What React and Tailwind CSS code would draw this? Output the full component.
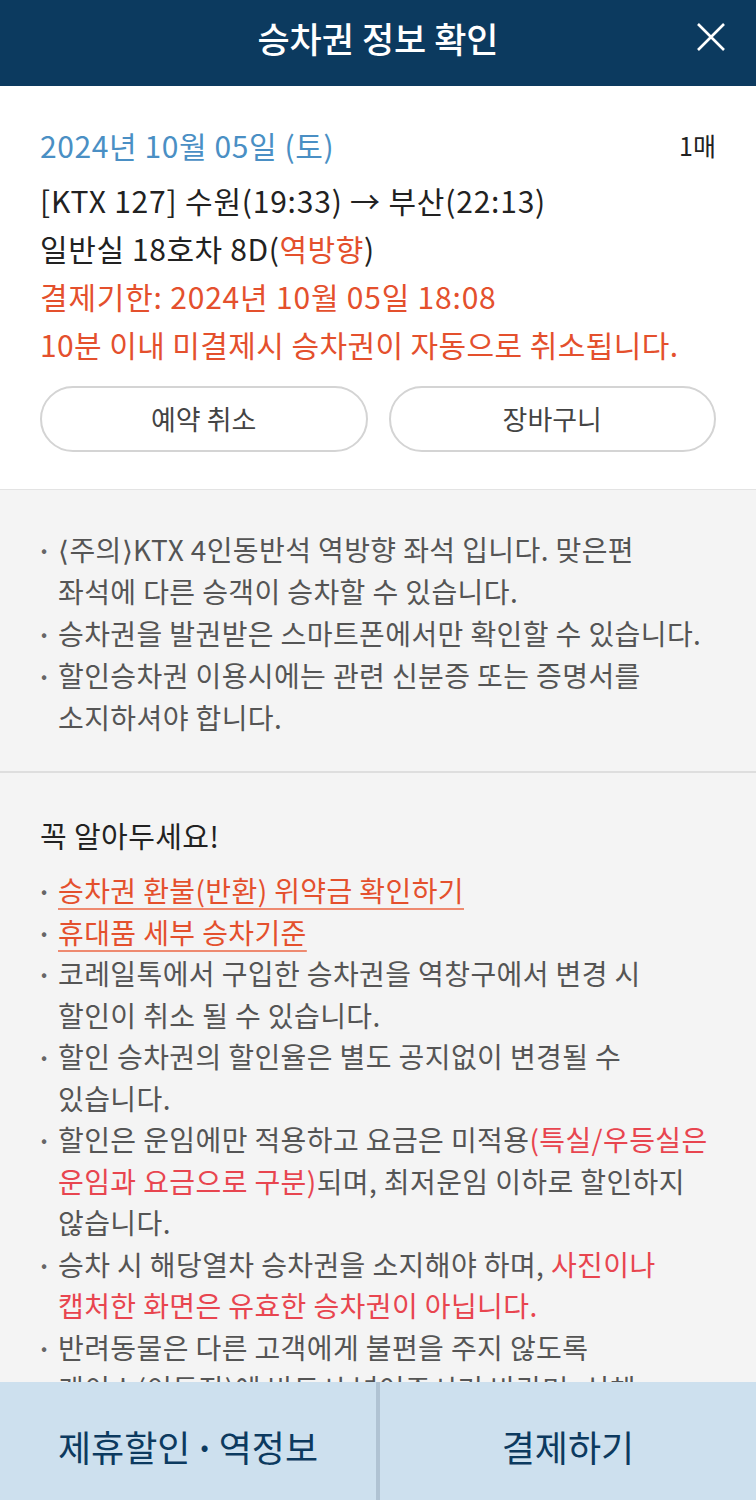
import React from "react";

const F = { fontFamily: '"Noto Sans CJK KR", "Noto Sans", sans-serif' };

function Bullet({ children }) {
  return (
    <div className="flex">
      <span className="w-[18px] shrink-0 text-[#666] text-[18px] pl-[1px]">•</span>
      <div className="flex-1 whitespace-nowrap">{children}</div>
    </div>
  );
}

export default function App() {
  return (
    <div style={F} className="w-[756px] min-h-[1500px] bg-[#f4f4f4] relative">
      <header className="h-[86px] bg-[#0c3a5f] flex items-center justify-center relative">
        <h1 className="text-white text-[35px] font-medium tracking-[0px] pb-[10px]">승차권 정보 확인</h1>
        <svg className="absolute right-[30px] top-[22px]" width="30" height="30" viewBox="0 0 30 30">
          <path d="M2 2 L28 28 M28 2 L2 28" stroke="white" strokeWidth="2.6" fill="none" />
        </svg>
      </header>

      <section className="bg-white px-[40px] pt-[35px] pb-[37px] border-b border-[#e3e3e3]">
        <div className="flex items-center justify-between leading-[48px] mb-[7px]">
          <span className="text-[#4a8fc4] text-[30px] tracking-[0.6px]">2024년 10월 05일 (토)</span>
          <span className="text-[#222] text-[25px]">1매</span>
        </div>
        <div className="text-[#222] text-[30px] leading-[48px] tracking-[0.8px] whitespace-nowrap">[KTX 127] 수원(19:33) → 부산(22:13)</div>
        <div className="text-[#222] text-[30px] leading-[48px] tracking-[0.6px]">
          일반실 18호차 8D(<span className="text-[#e4502d]">역방향</span>)
        </div>
        <div className="text-[#e4502d] text-[30px] leading-[48px] tracking-[0.8px] whitespace-nowrap">결제기한: 2024년 10월 05일 18:08</div>
        <div className="text-[#e4502d] text-[30px] leading-[48px] tracking-[0.4px] whitespace-nowrap">10분 이내 미결제시 승차권이 자동으로 취소됩니다.</div>
        <div className="grid grid-cols-2 gap-[21px] mt-[18px]">
          <button className="h-[66px] rounded-full border-2 border-[#d4d4d4] bg-white text-[#444] text-[27px]">예약 취소</button>
          <button className="h-[66px] rounded-full border-2 border-[#d4d4d4] bg-white text-[#444] text-[27px]">장바구니</button>
        </div>
      </section>

      <section className="bg-[#f4f4f4] px-[40px] pt-[38px] pb-[33px] border-b-2 border-[#dedede] text-[#555] text-[28px] leading-[42px] tracking-[0.4px]">
        <Bullet>⟨주의⟩KTX 4인동반석 역방향 좌석 입니다. 맞은편<br />좌석에 다른 승객이 승차할 수 있습니다.</Bullet>
        <Bullet>승차권을 발권받은 스마트폰에서만 확인할 수 있습니다.</Bullet>
        <Bullet>할인승차권 이용시에는 관련 신분증 또는 증명서를<br />소지하셔야 합니다.</Bullet>
      </section>

      <section className="bg-[#f4f4f4] px-[40px] pt-[41px] pb-[160px] text-[#555] text-[28px] leading-[41.5px] tracking-[0.4px]">
        <h2 className="text-[#222] text-[29px] leading-[42px] mb-[14px]">꼭 알아두세요!</h2>
        <Bullet>
          <span className="text-[#e4502d] underline decoration-2 decoration-[#ee8a70] underline-offset-[6px]">승차권 환불(반환) 위약금 확인하기</span>
        </Bullet>
        <Bullet>
          <span className="text-[#e4502d] underline decoration-2 decoration-[#ee8a70] underline-offset-[6px]">휴대품 세부 승차기준</span>
        </Bullet>
        <Bullet>코레일톡에서 구입한 승차권을 역창구에서 변경 시<br />할인이 취소 될 수 있습니다.</Bullet>
        <Bullet>할인 승차권의 할인율은 별도 공지없이 변경될 수<br />있습니다.</Bullet>
        <Bullet>
          할인은 운임에만 적용하고 요금은 미적용<span className="text-[#e8454f]">(특실/우등실은<br />운임과 요금으로 구분)</span>되며, 최저운임 이하로 할인하지<br />않습니다.
        </Bullet>
        <Bullet>
          승차 시 해당열차 승차권을 소지해야 하며, <span className="text-[#e8454f]">사진이나<br />캡처한 화면은 유효한 승차권이 아닙니다.</span>
        </Bullet>
        <Bullet>반려동물은 다른 고객에게 불편을 주지 않도록<br />케이스(이동장)에 반드시 넣어주시기 바라며, 신체<br />일부를 밖으로 내놓지 않아야 합니다.</Bullet>
      </section>

      <nav className="fixed bottom-0 left-0 w-[756px] h-[118px] bg-[#cde0ee] flex">
        <div className="w-[376px] flex items-center justify-center gap-[10px] pt-[10px] text-[#0c3a5f] text-[36px]">
          <span>제휴할인</span>
          <span className="text-[24px]">•</span>
          <span>역정보</span>
        </div>
        <div className="w-[4px] bg-[#b0c3d3]"></div>
        <div className="flex-1 flex items-center justify-center pt-[10px] text-[#0c3a5f] text-[36px]">결제하기</div>
      </nav>
    </div>
  );
}
